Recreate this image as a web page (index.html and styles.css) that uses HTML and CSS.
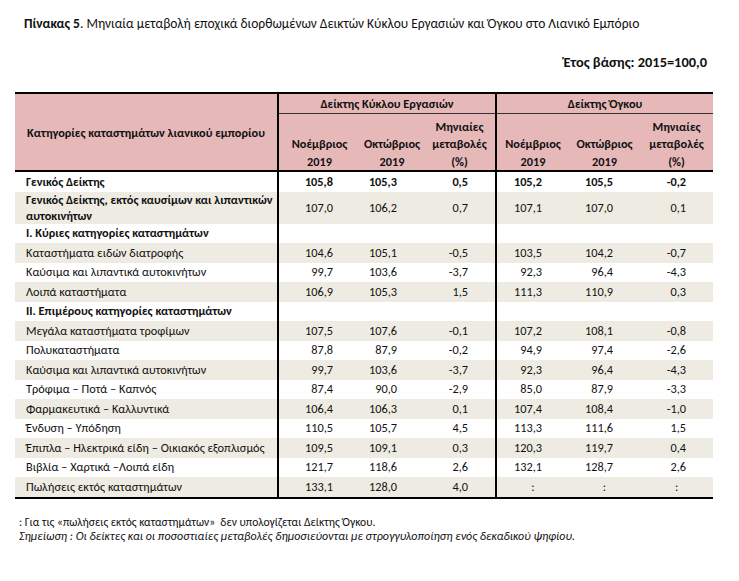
FILE: index.html
```html
<!DOCTYPE html>
<html lang="el">
<head>
<meta charset="utf-8">
<title>Πίνακας 5</title>
<link rel="stylesheet" href="styles.css">
</head>
<body>
<div class="page">
  <p class="title"><b>Πίνακας 5</b>. Μηνιαία μεταβολή εποχικά διορθωμένων Δεικτών Κύκλου Εργασιών και Όγκου στο Λιανικό Εμπόριο</p>
  <p class="base">Έτος βάσης: 2015=100,0</p>
  <table class="tbl">
    <colgroup>
      <col class="c-lab"><col class="c-a1"><col class="c-a2"><col class="c-a3"><col class="c-b1"><col class="c-b2"><col class="c-b3">
    </colgroup>
    <thead>
      <tr class="h1">
        <th rowspan="2" class="lab-h">Κατηγορίες καταστημάτων λιανικού εμπορίου</th>
        <th colspan="3" class="grp gs">Δείκτης Κύκλου Εργασιών</th>
        <th colspan="3" class="grp gs">Δείκτης Όγκου</th>
      </tr>
      <tr class="h2">
        <th class="gs">Νοέμβριος<br>2019</th>
        <th>Οκτώβριος<br>2019</th>
        <th>Μηνιαίες<br>μεταβολές<br>(%)</th>
        <th class="gs">Νοέμβριος<br>2019</th>
        <th>Οκτώβριος<br>2019</th>
        <th>Μηνιαίες<br>μεταβολές<br>(%)</th>
      </tr>
    </thead>
    <tbody>
      <tr class="bold">
        <td class="lab">Γενικός Δείκτης</td>
        <td class="num gs">105,8</td><td class="num">105,3</td><td class="num">0,5</td>
        <td class="num gs">105,2</td><td class="num">105,5</td><td class="num">-0,2</td>
      </tr>
      <tr class="shade tall">
        <td class="lab b">Γενικός Δείκτης, εκτός καυσίμων και λιπαντικών αυτοκινήτων</td>
        <td class="num gs">107,0</td><td class="num">106,2</td><td class="num">0,7</td>
        <td class="num gs">107,1</td><td class="num">107,0</td><td class="num">0,1</td>
      </tr>
      <tr>
        <td class="lab b">I. Κύριες κατηγορίες καταστημάτων</td>
        <td class="gs"></td><td></td><td></td><td class="gs"></td><td></td><td></td>
      </tr>
      <tr class="shade">
        <td class="lab">Καταστήματα ειδών διατροφής</td>
        <td class="num gs">104,6</td><td class="num">105,1</td><td class="num">-0,5</td>
        <td class="num gs">103,5</td><td class="num">104,2</td><td class="num">-0,7</td>
      </tr>
      <tr>
        <td class="lab">Καύσιμα και λιπαντικά αυτοκινήτων</td>
        <td class="num gs">99,7</td><td class="num">103,6</td><td class="num">-3,7</td>
        <td class="num gs">92,3</td><td class="num">96,4</td><td class="num">-4,3</td>
      </tr>
      <tr class="shade">
        <td class="lab">Λοιπά καταστήματα</td>
        <td class="num gs">106,9</td><td class="num">105,3</td><td class="num">1,5</td>
        <td class="num gs">111,3</td><td class="num">110,9</td><td class="num">0,3</td>
      </tr>
      <tr>
        <td class="lab b">II. Επιμέρους κατηγορίες καταστημάτων</td>
        <td class="gs"></td><td></td><td></td><td class="gs"></td><td></td><td></td>
      </tr>
      <tr class="shade">
        <td class="lab">Μεγάλα καταστήματα τροφίμων</td>
        <td class="num gs">107,5</td><td class="num">107,6</td><td class="num">-0,1</td>
        <td class="num gs">107,2</td><td class="num">108,1</td><td class="num">-0,8</td>
      </tr>
      <tr>
        <td class="lab">Πολυκαταστήματα</td>
        <td class="num gs">87,8</td><td class="num">87,9</td><td class="num">-0,2</td>
        <td class="num gs">94,9</td><td class="num">97,4</td><td class="num">-2,6</td>
      </tr>
      <tr class="shade">
        <td class="lab">Καύσιμα και λιπαντικά αυτοκινήτων</td>
        <td class="num gs">99,7</td><td class="num">103,6</td><td class="num">-3,7</td>
        <td class="num gs">92,3</td><td class="num">96,4</td><td class="num">-4,3</td>
      </tr>
      <tr>
        <td class="lab">Τρόφιμα – Ποτά – Καπνός</td>
        <td class="num gs">87,4</td><td class="num">90,0</td><td class="num">-2,9</td>
        <td class="num gs">85,0</td><td class="num">87,9</td><td class="num">-3,3</td>
      </tr>
      <tr class="shade">
        <td class="lab">Φαρμακευτικά – Καλλυντικά</td>
        <td class="num gs">106,4</td><td class="num">106,3</td><td class="num">0,1</td>
        <td class="num gs">107,4</td><td class="num">108,4</td><td class="num">-1,0</td>
      </tr>
      <tr>
        <td class="lab">Ένδυση – Υπόδηση</td>
        <td class="num gs">110,5</td><td class="num">105,7</td><td class="num">4,5</td>
        <td class="num gs">113,3</td><td class="num">111,6</td><td class="num">1,5</td>
      </tr>
      <tr class="shade">
        <td class="lab">Έπιπλα – Ηλεκτρικά είδη – Οικιακός εξοπλισμός</td>
        <td class="num gs">109,5</td><td class="num">109,1</td><td class="num">0,3</td>
        <td class="num gs">120,3</td><td class="num">119,7</td><td class="num">0,4</td>
      </tr>
      <tr>
        <td class="lab">Βιβλία – Χαρτικά –Λοιπά είδη</td>
        <td class="num gs">121,7</td><td class="num">118,6</td><td class="num">2,6</td>
        <td class="num gs">132,1</td><td class="num">128,7</td><td class="num">2,6</td>
      </tr>
      <tr class="shade last">
        <td class="lab">Πωλήσεις εκτός καταστημάτων</td>
        <td class="num gs">133,1</td><td class="num">128,0</td><td class="num">4,0</td>
        <td class="ctr gs">:</td><td class="ctr">:</td><td class="ctr">:</td>
      </tr>
    </tbody>
  </table>
  <div class="notes">
    <p class="n1">: Για τις «πωλήσεις εκτός καταστημάτων»&nbsp; δεν υπολογίζεται Δείκτης Όγκου.</p>
    <p class="it">Σημείωση : Οι δείκτες και οι ποσοστιαίες μεταβολές δημοσιεύονται με στρογγυλοποίηση ενός δεκαδικού ψηφίου.</p>
  </div>
</div>
</body>
</html>
```

FILE: styles.css
```css
html, body {
  margin: 0;
  padding: 0;
  background: #fff;
}

body {
  font-family: "Carlito", "Open Sans", "Liberation Sans", sans-serif;
  color: #111;
}

.page {
  width: 739px;
}

.title {
  margin: 15px 0 0 24px;
  font-size: 13.5px;
  line-height: 18px;
  white-space: nowrap;
}

.base {
  margin: 20px 32px 0 0;
  text-align: right;
  font-size: 14.4px;
  line-height: 18px;
  font-weight: bold;
}

.tbl {
  margin: 21px 0 0 15px;
  border-collapse: collapse;
  table-layout: fixed;
  width: 698px;
  font-size: 12.3px;
}

.c-lab { width: 263px; }
.c-a1 { width: 82px; }
.c-a2 { width: 64px; }
.c-a3 { width: 72px; }
.c-b1 { width: 73px; }
.c-b2 { width: 71px; }
.c-b3 { width: 73px; }

.tbl th {
  background: #e6b9b8;
  font-weight: bold;
  text-align: center;
  padding: 0;
}

.h1 th {
  border-top: 2px solid #000;
  height: 19px;
}

.h1 .grp {
  border-bottom: 1px solid #333;
}

.h2 th {
  height: 56px;
  vertical-align: bottom;
  line-height: 17.5px;
  border-bottom: 2px solid #000;
  padding-bottom: 0;
}

.lab-h {
  vertical-align: middle;
  border-bottom: 2px solid #000;
}

.gs {
  border-left: 2px solid #000;
}

.tbl td {
  padding: 0;
  height: 19.5px;
  line-height: 14px;
}

.tbl tr.tall td {
  height: 32px;
  line-height: 15.5px;
}

.tbl tr.shade td {
  background: #eeece2;
}

.tbl tr.last td {
  border-bottom: 2px solid #000;
}

.tbl td.lab {
  padding-left: 11px;
  text-align: left;
}

.tbl td.b,
.tbl tr.bold td {
  font-weight: bold;
}

.tbl td.num {
  text-align: right;
  padding-right: 27px;
}

.tbl td.ctr {
  text-align: center;
}

.notes {
  margin: 16px 0 0 19px;
  font-size: 12px;
  line-height: 14px;
}

.notes p {
  margin: 0;
}

.notes .n1 {
  font-size: 11.6px;
}

.notes .it {
  font-style: italic;
}
```
